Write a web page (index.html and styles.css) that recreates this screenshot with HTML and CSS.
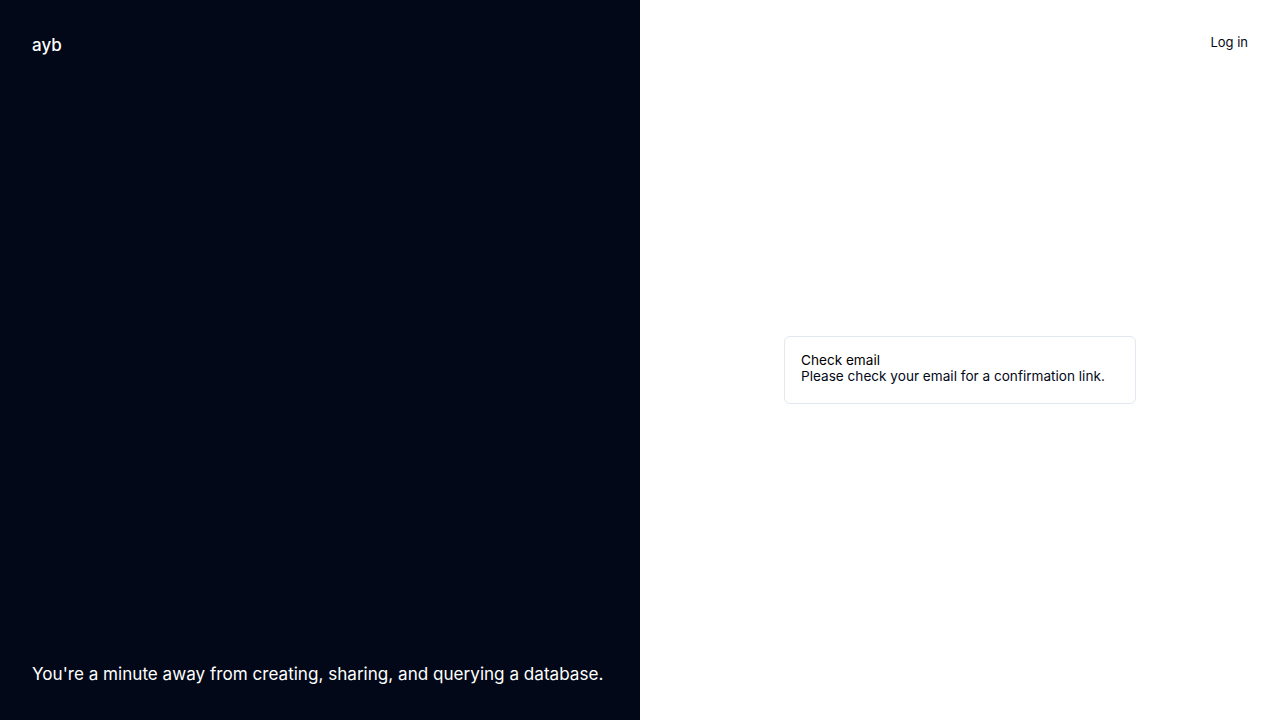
FILE: index.html
```html
<!DOCTYPE html>
<html lang="en">
<head>
<meta charset="utf-8">
<title>ayb</title>
<link rel="stylesheet" href="styles.css">
</head>
<body>
<div class="page">
  <aside class="side">
    <div class="logo">ayb</div>
    <p class="tagline">You're a minute away from creating, sharing, and querying a database.</p>
  </aside>
  <main class="main">
    <a class="login" href="#">Log in</a>
    <div class="alert">
      <div class="alert-title">Check email</div>
      <div class="alert-desc">Please check your email for a confirmation link.</div>
    </div>
  </main>
</div>
</body>
</html>
```
FILE: styles.css
```css
* { box-sizing: border-box; }
html, body { margin: 0; height: 100%; }
body {
  font-family: Inter, "Liberation Sans", sans-serif;
  color: #020817;
  background: #fff;
}
.page {
  display: grid;
  grid-template-columns: 640px 1fr;
  height: 720px;
}
.side {
  background: #020817;
  color: #fff;
  padding: 32px;
  display: flex;
  flex-direction: column;
  justify-content: space-between;
}
.logo {
  font-size: 17px;
  font-weight: 500;
  line-height: 26px;
}
.tagline {
  margin: 0;
  font-size: 17.1px;
  line-height: 18px;
  padding-bottom: 5px;
}
.main {
  position: relative;
  display: flex;
  align-items: center;
  justify-content: center;
}
.login {
  position: absolute;
  top: 32px;
  right: 32px;
  font-size: 13px;
  line-height: 20px;
  color: #020817;
  text-decoration: none;
}
.alert {
  width: 352px;
  margin-top: 20px;
  border: 1px solid #e2e8f0;
  border-radius: 6px;
  padding: 15px 16px 19px;
}
.alert-title, .alert-desc {
  font-size: 13.6px;
  line-height: 16px;
}
.alert-title { font-weight: 400; color: #000; }
```
